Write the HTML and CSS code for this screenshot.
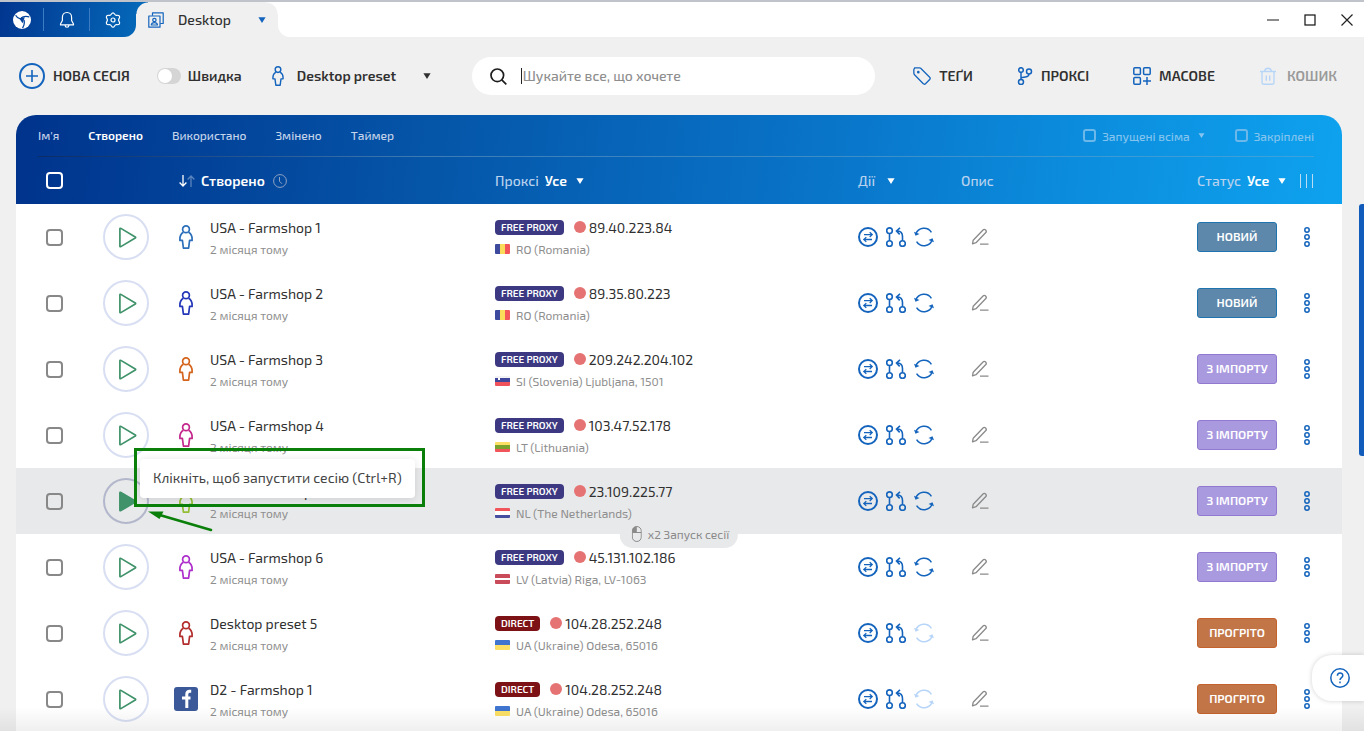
FILE: index.html
```html
<!DOCTYPE html>
<html lang="uk">
<head>
<meta charset="utf-8">
<title>Desktop</title>
<meta name="viewport" content="width=device-width, initial-scale=1">
<link rel="stylesheet" href="styles.css">
</head>
<body>
<svg class="sprite" aria-hidden="true">
  <symbol id="caret" viewBox="0 0 8 6"><path d="M0.4 0.3h7.2L4 6z" fill="currentColor"/></symbol>
  <symbol id="person" viewBox="0 0 14 24"><g fill="none" stroke="currentColor" stroke-width="1.7" stroke-linejoin="round"><circle cx="7" cy="4.3" r="3.4"/><path d="M4.400 7.300C2.100 8.700.9 11 .9 14v1.400h2.500l1 7.700h5.200l1-7.700h2.500V14c0-3-1.200-5.300-3.500-6.700"/></g></symbol>
  <symbol id="play" viewBox="0 0 20 22"><path d="M2 1.900v18.200c0 .5.5.8 1 .5l15.200-9c.5-.3.5-.9 0-1.200L3 1.400c-.5-.3-1 0-1 .5z" stroke="currentColor" stroke-width="1.800" stroke-linejoin="round"/></symbol>
  <symbol id="swap" viewBox="0 0 20 20"><g fill="none" stroke="currentColor"><circle cx="10" cy="10" r="9" stroke-width="2"/><path d="M6 7.600h8M11.700 5.200l2.500 2.400-2.500 2.400M14 12.500H6M8.300 10.100l-2.500 2.400 2.500 2.400" stroke-width="1.300"/></g></symbol>
  <symbol id="route" viewBox="0 0 20 20"><g fill="none" stroke="currentColor" stroke-width="1.600"><circle cx="3.500" cy="3.700" r="2.800"/><circle cx="3.500" cy="16.600" r="2.800"/><circle cx="16.500" cy="16.600" r="2.800"/><path d="M3.500 6.500v7.300M16.500 13.800V9.500c0-3.500-1.500-5.500-5-5.500M14 .8L10.500 4l3.200 3.400"/></g></symbol>
  <symbol id="sync" viewBox="0 0 20 20"><g fill="none" stroke="currentColor" stroke-width="1.500"><path d="M1.800 7.200A8.700 8.700 0 0 1 17.400 5.300M18.200 12.800A8.700 8.700 0 0 1 2.600 14.700"/></g><path d="M0 4.800l1.500 4 4-1.800zM20 15.200l-1.500-4-4 1.800z" fill="currentColor"/></symbol>
  <symbol id="pencil" viewBox="0 0 18 18"><g fill="none" stroke="currentColor" stroke-width="1.300" stroke-linejoin="round"><path d="M2.200 12.200L11.800 2.200c.8-.8 2-.9 2.800-.2.800.8.800 2 0 2.800L5 14.700l-3.500 1.200zM9 16.200h8.500"/></g></symbol>
  <symbol id="dots" viewBox="0 0 6 20"><g fill="none" stroke="currentColor" stroke-width="1.500"><circle cx="3" cy="3" r="2.200"/><circle cx="3" cy="10" r="2.200"/><circle cx="3" cy="17" r="2.200"/></g></symbol>
  <symbol id="facebook" viewBox="0 0 24 24"><rect width="24" height="24" rx="3" fill="#3b5998"/><path d="M17.200 4.200h-1.500c-2.200 0-2.900 1.100-2.900 3V21M8 11h8.500" fill="none" stroke="#fff" stroke-width="3"/></symbol>
</svg>

<header class="titlebar">
  <nav class="appnav" aria-label="Програма">
    <button class="appnav-btn" aria-label="Головна"><svg width="18" height="18" viewBox="0 0 18 18"><circle cx="9" cy="9" r="9" fill="#fff"/><g fill="none" stroke="#03439c" stroke-width="1.300"><path d="M2.600 4.300c1.200 2.200 2.800 3.300 4.800 3.600M16.300 5.800c-3-.8-6.200-.6-8.300 1.200M9.500 17c1.700-2.300 2.200-5 1.500-8"/></g><path d="M6.200 7.200l5.600-.9-2.300 6z" fill="#03439c"/></svg></button>
    <button class="appnav-btn" aria-label="Сповіщення"><svg width="16" height="18" viewBox="0 0 16 18"><path d="M8 1.500C5 1.500 3.400 3.500 3.400 6.200v3.300L1.500 13v.9h13V13l-1.900-3.500V6.200C12.600 3.500 11 1.500 8 1.500zM6 14.200c.3 2.700 3.700 2.700 4 0" fill="none" stroke="#fff" stroke-width="1.200" stroke-linejoin="round"/></svg></button>
    <button class="appnav-btn" aria-label="Налаштування"><svg width="16" height="16" viewBox="0 0 16 16"><g fill="none" stroke="#fff" stroke-width="1.200" stroke-linejoin="round"><path d="M8 .8c1.500 0 1.500 2 2.800 2.500 1.200.4 2.500-.8 3.600.8 1 1.700-.8 2.300-.8 3.900s1.800 2.200.8 3.900c-1.100 1.600-2.400.4-3.600.8C9.500 13.200 9.500 15.200 8 15.200s-1.500-2-2.800-2.500c-1.200-.4-2.500.8-3.600-.8-1-1.700.8-2.300.8-3.900s-1.800-2.200-.8-3.900c1.100-1.600 2.400-.4 3.600-.8C6.500 2.800 6.500.8 8 .8z"/><circle cx="8" cy="8" r="2"/></g></svg></button>
  </nav>
  <button class="tab">
    <svg width="16" height="16" viewBox="0 0 16 16"><g fill="none" stroke="#1464bd" stroke-width="1.200" stroke-linejoin="round"><path d="M4.500 3.800V.8h10.700v10.700h-3"/><rect x=".8" y="4" width="11.200" height="11.200"/><circle cx="6.400" cy="8" r="1.700"/><path d="M3.300 13c.2-3.200 6-3.200 6.200 0z"/></g></svg>
    <span class="tab-name">Desktop</span>
    <svg class="caret" aria-hidden="true"><use href="#caret"/></svg>
  </button>
  <div class="winbar">
    <button class="win-btn" aria-label="Згорнути"><svg width="12" height="12" viewBox="0 0 12 12"><path d="M0 6h12" stroke="#666" stroke-width="1.500"/></svg></button>
    <button class="win-btn" aria-label="Розгорнути"><svg width="12" height="12" viewBox="0 0 12 12"><rect x="1" y="1" width="10" height="10" fill="none" stroke="#111" stroke-width="1.200"/></svg></button>
    <button class="win-btn" aria-label="Закрити"><svg width="12" height="12" viewBox="0 0 12 12"><path d="M.5.5l11 11M11.500.5l-11 11" stroke="#222" stroke-width="1.200"/></svg></button>
  </div>
</header>

<section class="toolbar">
  <button class="tool new-session"><svg width="26" height="26" viewBox="0 0 26 26"><g fill="none" stroke="#1464bd"><circle cx="13" cy="13" r="12" stroke-width="2"/><path d="M13 7v12M7 13h12" stroke-width="1.600"/></g></svg>НОВА СЕСІЯ</button>
  <label class="quick"><input type="checkbox" class="switch">Швидка</label>
  <div class="preset">
    <svg class="preset-icon" aria-hidden="true"><use href="#person"/></svg>
    <select class="plain-select" aria-label="Пресет"><option>Desktop preset</option></select>
    <svg class="caret" aria-hidden="true"><use href="#caret"/></svg>
  </div>
  <label class="search">
    <svg width="17" height="17" viewBox="0 0 17 17"><g fill="none" stroke="#1d1d1d" stroke-width="1.700"><circle cx="7.300" cy="7.300" r="6.300"/><path d="M11.800 11.800l4.500 4.500"/></g></svg>
    <input type="text" class="search-input" placeholder="Шукайте все, що хочете" aria-label="Пошук">
  </label>
  <nav class="tools" aria-label="Інструменти">
    <button class="tool"><svg width="18" height="18" viewBox="0 0 18 18"><g fill="none" stroke="#1464bd" stroke-width="1.300" stroke-linejoin="round"><path d="M.8 2.800L1.700.9 6.500.8c.5 0 .9.200 1.200.5l9 9c.7.600.7 1.500 0 2.200l-4.200 4.200c-.7.700-1.600.7-2.200 0l-8.800-9c-.4-.4-.5-.7-.6-1.200z"/><circle cx="5.300" cy="5.200" r=".7"/></g></svg>ТЕҐИ</button>
    <button class="tool"><svg width="16" height="18" viewBox="0 0 16 18"><g fill="none" stroke="#1464bd" stroke-width="1.500"><circle cx="4" cy="3" r="2.300"/><circle cx="12" cy="4.500" r="2.500"/><circle cx="4" cy="15" r="2.500"/><path d="M4 5.300v7.200M12 7c0 3-3 3-8 3.500"/></g></svg>ПРОКСІ</button>
    <button class="tool"><svg width="18" height="18" viewBox="0 0 18 18"><g fill="none" stroke="#1464bd" stroke-width="1.500"><rect x=".8" y=".8" width="6.600" height="6.600" rx="1"/><rect x="10.600" y=".8" width="6.600" height="6.600" rx="1"/><rect x=".8" y="10.600" width="6.600" height="6.600" rx="1"/><path d="M14 10v8M10 14h8"/></g></svg>МАСОВЕ</button>
    <button class="tool tool-off" disabled><svg width="18" height="18" viewBox="0 0 18 18"><g fill="none" stroke="#b7d5f8" stroke-width="1.400"><path d="M1 4.500h16M5.500 4.500C6 .2 12 .2 12.500 4.500M3 4.500v11c0 1 .5 1.700 1.500 1.700h9c1 0 1.500-.7 1.500-1.700v-11M7.300 8.500v5.200M10.700 8.500v5.200"/></g></svg>КОШИК</button>
  </nav>
</section>

<main class="panel">
  <div class="filters">
    <button class="filter">Ім'я</button>
    <button class="filter filter-on">Створено</button>
    <button class="filter">Використано</button>
    <button class="filter">Змінено</button>
    <button class="filter">Таймер</button>
    <div class="filters-side">
      <label class="flag-filter"><input type="checkbox" class="check check-small">Запущені всіма <svg class="caret caret-small" aria-hidden="true"><use href="#caret"/></svg></label>
      <label class="flag-filter"><input type="checkbox" class="check check-small">Закріплені</label>
    </div>
  </div>
  <table class="sessions">
    <colgroup><col class="col-check"><col class="col-play"><col class="col-name"><col class="col-proxy"><col class="col-actions"><col class="col-note"><col class="col-status"><col class="col-menu"></colgroup>
    <thead>
      <tr>
        <th class="cell-check"><input type="checkbox" class="check check-light" aria-label="Вибрати все"></th>
        <th></th>
        <th><button class="sort"><svg width="16" height="12" viewBox="0 0 16 12"><g fill="none" stroke="#fff" stroke-width="1.300"><path d="M4 0v11M.6 7.500L4 11l3.400-3.500"/><path d="M12 12V1M8.600 4.500L12 1l3.400 3.500" opacity=".35"/></g></svg><b>Створено</b><svg class="clock" width="14" height="14" viewBox="0 0 14 14"><g fill="none" stroke="#8fa3c4" stroke-width="1"><circle cx="7" cy="7" r="6.400"/><path d="M6.500 3v4.300l2.500 2.500"/></g></svg></button></th>
        <th><label class="pick">Проксі<select class="plain-select"><option>Усе</option></select><svg class="caret" aria-hidden="true"><use href="#caret"/></svg></label></th>
        <th><button class="pick pick-wide">Дії<svg class="caret" aria-hidden="true"><use href="#caret"/></svg></button></th>
        <th>Опис</th>
        <th><label class="pick">Статус<select class="plain-select"><option>Усе</option></select><svg class="caret" aria-hidden="true"><use href="#caret"/></svg></label></th>
        <th><button class="columns" aria-label="Стовпці"><svg width="14" height="14" viewBox="0 0 14 14"><path d="M.5 0v14M6.500 0v14M12.500 0v14" stroke="#b9dcf5" stroke-width="1"/></svg></button></th>
      </tr>
    </thead>
    <tbody id="rows"></tbody>
  </table>
</main>

<div class="scroll-thumb"></div>
<div class="page-fade"></div>
<button class="help" aria-label="Довідка"><svg width="20" height="20" viewBox="0 0 20 20"><g fill="none" stroke="#1464bd" stroke-width="1.500"><circle cx="10" cy="10" r="9.200"/><path d="M7.400 7.700c0-3.600 5.400-3.500 5.400-.2 0 2.200-2.800 2-2.800 4.500M10 13.600v1.600"/></g></svg></button>
<script src="script.js"></script>
</body>
</html>
```

FILE: styles.css
```css
* { box-sizing: border-box; }

:root {
  --blue: #1464bd;
  --page: #f0f0f0;
  --ink: #303030;
  --muted: #8e8e8e;
}

body {
  margin: 0;
  height: 100vh;
  overflow: hidden;
  position: relative;
  display: flex;
  flex-direction: column;
  background: var(--page);
  color: var(--ink);
  font: 14px/20px "Exo 2", Roboto, "Noto Sans", sans-serif;
}

button, input, select { font: inherit; color: inherit; }
button { padding: 0; border: 0; background: none; cursor: pointer; }
b { font-weight: 600; }
svg { display: block; flex: none; }
.sprite { position: absolute; width: 0; height: 0; }
.caret { width: 8px; height: 6px; }

/* Title bar */
.titlebar {
  display: flex;
  flex: none;
  height: 37px;
  border-top: 2px solid #c0c3c9;
}
.appnav {
  display: flex;
  align-items: center;
  width: 136px;
  border-radius: 0 0 12px 0;
  background: linear-gradient(100deg, #02368f, #0467b8);
}
.appnav-btn {
  display: grid;
  place-items: center;
  width: 46px;
  height: 23px;
}
.appnav-btn:first-child { width: 43px; }
.appnav-btn + .appnav-btn { border-left: 1px solid #3b7cc4; }
.tab {
  position: relative;
  display: flex;
  align-items: center;
  width: 142px;
  padding: 0 12px;
  font-weight: 500;
}
.tab::before, .tab::after {
  content: "";
  position: absolute;
  top: 0;
  width: 12px;
  height: 12px;
}
.tab::before { left: 0; background: radial-gradient(circle at 100% 100%, var(--page) 11px, #0467b8 12px); }
.tab::after { right: 0; background: radial-gradient(circle at 0 100%, var(--page) 11px, #fff 12px); }
.tab-name { flex: 1; padding-left: 14px; text-align: left; }
.tab .caret { color: var(--blue); }
.winbar {
  display: flex;
  flex: 1;
  justify-content: flex-end;
  align-items: center;
  gap: 25px;
  padding-right: 11px;
  border-radius: 0 0 0 12px;
  background: #fff;
}

/* Toolbar */
.toolbar {
  display: flex;
  flex: none;
  align-items: center;
  height: 78px;
  padding: 0 27px 0 19px;
  font-weight: 600;
}
.tool { display: flex; align-items: center; gap: 8px; }
.tool-off { gap: 10px; color: #999; }
.quick { display: flex; align-items: center; gap: 7px; margin-left: 27px; }
.switch {
  appearance: none;
  display: flex;
  align-items: center;
  width: 24px;
  height: 16px;
  margin: 0;
  padding: 0 1px;
  border-radius: 8px;
  background: #d5d5d5;
}
.switch::before {
  content: "";
  width: 14px;
  height: 14px;
  border-radius: 50%;
  background: #fff;
}
.preset { display: flex; align-items: center; width: 159px; margin-left: 30px; }
.preset .plain-select { flex: 1; margin-left: 13px; }
.preset-icon { width: 12px; height: 20px; color: var(--blue); }
.plain-select {
  appearance: none;
  padding: 0;
  border: 0;
  outline: 0;
  background: none;
}
.search {
  display: flex;
  flex: 1;
  align-items: center;
  gap: 14px;
  height: 38px;
  margin: 0 38px 0 41px;
  padding: 0 18px;
  border-radius: 19px;
  background: #fff;
}
.search-input {
  flex: 1;
  min-width: 0;
  height: 16px;
  padding: 0 0 0 1px;
  border: 0;
  border-left: 1px solid #222;
  outline: 0;
  background: none;
  font-weight: 500;
}
.search-input::placeholder { color: #8e8e8e; }
.tools { display: flex; gap: 44px; }

/* Session panel */
.panel {
  flex: 1 0 auto;
  margin: 0 22px 0 16px;
  overflow: hidden;
  border-radius: 20px 20px 0 0;
  background: linear-gradient(97deg, #00338c, #0556a9 32%, #0976ca 62%, #0c8fdf 82%, #0ea2ee) 0 0 / 100% 89px no-repeat #fff;
}
.filters {
  display: flex;
  align-items: center;
  gap: 29px;
  height: 42px;
  margin: 0 28px 0 22px;
  border-bottom: 1px solid #ffffff40;
  border-image: linear-gradient(90deg, #0b2b66, #3d7bb5 30%, #3da3dc) 1;
  color: #c5d4ea;
  font-size: 12px;
  font-weight: 500;
}
.filter { line-height: 18px; padding-bottom: 1px; }
.filter-on { color: #fff; font-weight: 600; }
.filters-side { display: flex; gap: 30px; margin-left: auto; color: #85c4ee; font-weight: 500; }
.flag-filter { display: flex; align-items: center; gap: 6px; line-height: 18px; }
.caret-small { width: 7px; height: 5px; margin-left: 2px; }

.check {
  appearance: none;
  display: block;
  width: 17px;
  height: 17px;
  margin: 0;
  border: 2px solid #888;
  border-radius: 4px;
}
.check-light { border-color: #fff; }
.check-small { width: 13px; height: 13px; border-color: #6cb8ea; border-radius: 3px; }

.sessions { width: 100%; border-collapse: collapse; table-layout: fixed; }
.col-check { width: 87px; }
.col-play { width: 71px; }
.col-name { width: 321px; }
.col-proxy { width: 363px; }
.col-actions { width: 103px; }
.col-status { width: 103px; }
.col-menu { width: 42px; }

th { height: 47px; padding: 0; color: #b9d2ee; font-weight: 500; text-align: left; }
td { height: 66px; padding: 0; }
.cell-check { padding-left: 30px; }
.sort { display: flex; align-items: center; gap: 6px; margin-left: 5px; color: #fff; }
.clock { margin-left: 2px; }
.pick { display: flex; align-items: center; gap: 6px; }
.pick .plain-select { color: #fff; font-weight: 600; }
.pick .caret { margin-left: 2px; color: #fff; }
.pick-wide { gap: 10px; color: inherit; font-weight: 500; }

.row-hover { position: relative; background: #e8e9ea; }
.play-wrap { position: relative; width: 46px; }
.play {
  display: grid;
  place-items: center;
  width: 46px;
  height: 46px;
  padding-left: 2px;
  border: 2px solid #d9dff3;
  border-radius: 50%;
  color: #3f9269;
}
.play svg { width: 19px; height: 21px; fill: none; }
.row-hover .play { border-color: #b3b7cc; }
.row-hover .play svg { fill: currentColor; }

.profile { display: flex; align-items: center; gap: 12px; }
.profile-icon { display: grid; place-items: center; width: 24px; }
.person { width: 14px; height: 24px; }
.fb { width: 24px; height: 24px; }
.lines { display: grid; gap: 1px; padding-top: 3px; padding-bottom: 1px; line-height: 21px; }
.sub { display: flex; align-items: center; gap: 6px; color: var(--muted); font-size: 12px; }
.address { display: flex; align-items: center; }
.badge {
  padding: 0 6px;
  border-radius: 4px;
  background: #3c3982;
  color: #fff;
  font-size: 10px;
  font-weight: 600;
  line-height: 15px;
}
.badge-direct { background: #7c1216; }
.dot { width: 12px; height: 12px; margin: 0 3px 0 10px; border-radius: 50%; background: #e67373; }
.country { width: 15px; height: 10px; border-radius: 1px; }
.ro { background: linear-gradient(90deg, #3e4a9e 33%, #fbdc5a 33% 66%, #f4555b 66%); }
.si { background: radial-gradient(circle at 4px 3px, #fff 1px, #0000 1px), linear-gradient(#f2f2f5 20%, #3f479c 20% 60%, #f0525c 60%); }
.lt { background: linear-gradient(#fbe065 33%, #79a32c 33% 66%, #f0555c 66%); }
.nl { background: linear-gradient(#f0555c 33%, #fff 33% 66%, #464f9f 66%); }
.lv { background: linear-gradient(#c94a59 40%, #fff 40% 60%, #c94a59 60%); }
.ua { background: linear-gradient(#3f74cf 50%, #fbe065 50%); }

.actions { display: flex; gap: 8px; color: var(--blue); }
.actions svg { width: 20px; height: 20px; }
.actions button:disabled { color: #b7d5f8; }
.note { display: block; margin-left: 10px; color: #8a8a8a; }
.note svg { width: 18px; height: 18px; }
.status {
  display: block;
  width: 80px;
  height: 30px;
  padding-bottom: 2px;
  border: 1px solid #1f74ad;
  border-radius: 3px;
  background: #5e88ab;
  color: #fff;
  font-size: 12px;
  font-weight: 600;
}
.status-import { border-color: #9179cf; background: #a999df; }
.status-warm { border-color: #c4622d; background: #c27647; }
.menu { display: block; margin-left: 4px; color: var(--blue); }
.menu svg { width: 6px; height: 20px; }
.columns { display: block; }

/* Overlays */
.tooltip {
  position: absolute;
  z-index: 2;
  left: 37px;
  top: -19px;
  padding: 9px 13px 10px;
  border-radius: 4px;
  background: #fff;
  box-shadow: 0 1px 8px #0000001f;
  color: #444;
  white-space: nowrap;
}
.mark {
  position: absolute;
  z-index: 3;
  left: 31px;
  top: -30px;
  width: 291px;
  height: 59px;
  border: 3px solid #0a800a;
  pointer-events: none;
}
.arrow { position: absolute; z-index: 3; left: 45px; top: 31px; width: 66px; height: 24px; pointer-events: none; }
.hint {
  position: absolute;
  z-index: 1;
  left: 50%;
  bottom: -14px;
  transform: translateX(-50%);
  display: flex;
  align-items: center;
  gap: 6px;
  height: 27px;
  padding: 0 9px 2px 12px;
  border-radius: 13px;
  background: #e8e9ea;
  color: #8a8a8a;
  font-size: 12px;
}
.scroll-thumb {
  position: absolute;
  right: 0;
  top: 204px;
  width: 5px;
  height: 252px;
  border-radius: 3px 0 0 3px;
  background: #115cba;
}
.page-fade {
  position: absolute;
  inset: auto 0 0 0;
  height: 24px;
  background: linear-gradient(#00000000, #00000010);
  pointer-events: none;
}
.help {
  position: absolute;
  right: 0;
  bottom: 30px;
  display: grid;
  place-items: center;
  width: 52px;
  height: 46px;
  padding-left: 4px;
  border-radius: 20px 0 0 20px;
  background: #fff;
  box-shadow: 0 0 5px #0000002e;
}
```

FILE: script.js
```js
const icon = (id, cls = "") => `<svg class="${cls}" aria-hidden="true"><use href="#${id}"/></svg>`;

const sessions = [
  ["USA - Farmshop 1", "#2d6fba", "89.40.223.84", "ro", "RO (Romania)", "new"],
  ["USA - Farmshop 2", "#2437b8", "89.35.80.223", "ro", "RO (Romania)", "new"],
  ["USA - Farmshop 3", "#d5641d", "209.242.204.102", "si", "SI (Slovenia) Ljubljana, 1501", "import"],
  ["USA - Farmshop 4", "#c4288c", "103.47.52.178", "lt", "LT (Lithuania)", "import"],
  ["USA - Farmshop 5", "#93bd33", "23.109.225.77", "nl", "NL (The Netherlands)", "import"],
  ["USA - Farmshop 6", "#ae2fcb", "45.131.102.186", "lv", "LV (Latvia) Riga, LV-1063", "import"],
  ["Desktop preset 5", "#b32d2d", "104.28.252.248", "ua", "UA (Ukraine) Odesa, 65016", "warm"],
  ["D2 - Farmshop 1", null, "104.28.252.248", "ua", "UA (Ukraine) Odesa, 65016", "warm"],
];
const statusNames = { new: "НОВИЙ", import: "З ІМПОРТУ", warm: "ПРОГРІТО" };
const hovered = 4;

const hoverParts = `
  <div class="tooltip" role="tooltip">Клікніть, щоб запустити сесію (Ctrl+R)</div>
  <div class="mark"></div>
  <svg class="arrow" viewBox="0 0 66 24"><path d="M10 5.500L63 21" stroke="#0a800a" stroke-width="2.600" stroke-linecap="round"/><path d="M0 2.500L15.500 2.500 11.500 10z" fill="#0a800a"/></svg>`;
const hint = `<div class="hint"><svg width="10" height="16" viewBox="0 0 10 16"><rect x=".5" y=".5" width="9" height="15" rx="4.500" fill="none" stroke="#8a8a8a"/><path d="M5 .5v6H.5V5C.5 2 2 .5 5 .5z" fill="#8a8a8a"/><path d="M.5 6.500h9" stroke="#8a8a8a"/></svg>x2 Запуск сесії</div>`;

document.getElementById("rows").innerHTML = sessions.map(([name, color, ip, flag, place, status], i) => {
  const direct = flag === "ua";
  const hover = i === hovered;
  return `<tr class="${hover ? "row-hover" : ""}">
    <td class="cell-check"><input type="checkbox" class="check" aria-label="${name}"></td>
    <td><div class="play-wrap"><button class="play" aria-label="Запустити">${icon("play")}</button>${hover ? hoverParts : ""}</div></td>
    <td><div class="profile">
      <span class="profile-icon" style="color:${color || "#3b5998"}">${color ? icon("person", "person") : icon("facebook", "fb")}</span>
      <div class="lines"><span>${name}</span><span class="sub">2 місяця тому</span></div>
    </div></td>
    <td><div class="lines">
      <span class="address"><span class="badge ${direct ? "badge-direct" : ""}">${direct ? "DIRECT" : "FREE PROXY"}</span><span class="dot"></span>${ip}</span>
      <span class="sub"><i class="country ${flag}"></i>${place}</span>
    </div>${hover ? hint : ""}</td>
    <td><div class="actions">
      <button aria-label="Проксі">${icon("swap")}</button>
      <button aria-label="Маршрут">${icon("route")}</button>
      <button aria-label="Оновити" ${direct ? "disabled" : ""}>${icon("sync")}</button>
    </div></td>
    <td><button class="note" aria-label="Редагувати опис">${icon("pencil")}</button></td>
    <td><button class="status status-${status}">${statusNames[status]}</button></td>
    <td><button class="menu" aria-label="Меню">${icon("dots")}</button></td>
  </tr>`;
}).join("");
```
